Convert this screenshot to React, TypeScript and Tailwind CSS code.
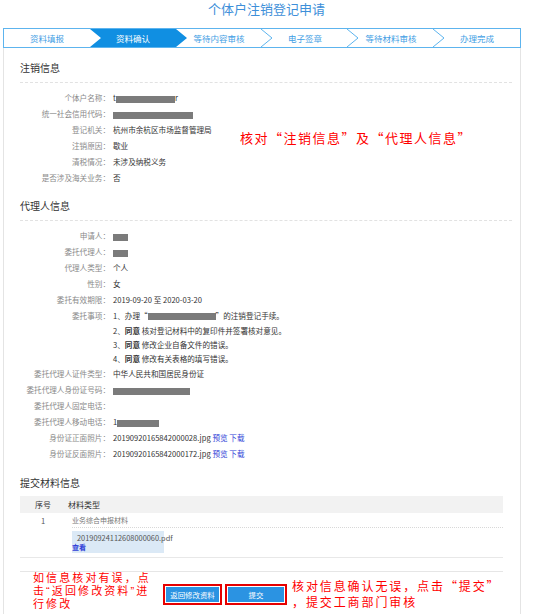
import { ReactNode } from "react";

const steps = ["资料填报", "资料确认", "等待内容审核", "电子签章", "等待材料审核", "办理完成"];

function Mask({ className }: { className: string }) {
    return <span className={`inline-block h-[7px] bg-[#7b7b7b] align-middle ${className}`} />;
}

function Row({ label, children }: { label: string; children?: ReactNode }) {
    return (
        <div className="flex h-4 items-center">
            <div className="w-[90px] shrink-0 text-right text-[#8a8a8a]">{label}：</div>
            <div className="pl-[3px] text-[#333]">{children}</div>
        </div>
    );
}

function Heading({ children, line = true }: { children: ReactNode; line?: boolean }) {
    return (
        <div className={`mr-[8px] ${line ? "border-b border-dashed border-[#e2e2e2] pb-1" : ""}`}>
            <h3 className="h-5 text-[10px] leading-5 text-[#333]">{children}</h3>
        </div>
    );
}

function Link({ children }: { children: ReactNode }) {
    return <span className="text-[#2f3fd8]">{children}</span>;
}

export default function App() {
    return (
        <div className="w-[533px] bg-white font-['Noto_Sans_CJK_SC',sans-serif] text-[7.6px]">
            {/* 标题 */}
            <h1 className="pt-[1px] text-center text-[13px] leading-[16px] text-[#3d8fd9]">个体户注销登记申请</h1>

            {/* 步骤条 */}
            <div className="ml-[3px] mt-[11px] flex h-[20px] w-[518px] border border-[#5db4ee] text-[8.5px]">
                {steps.map((s, i) => (
                    <div key={s} className="relative flex flex-1 items-center justify-center">
                        {i === 1 && (
                            <div className="absolute inset-y-0 left-0 -right-[11px] bg-[#108fe2] [clip-path:polygon(0_0,calc(100%-11px)_0,100%_50%,calc(100%-11px)_100%,0_100%,11px_50%)]" />
                        )}
                        <span className={`relative z-10 ${i === 1 ? "text-white" : "text-[#3f9ee4]"}`}>{s}</span>
                        {i >= 2 && i < 5 && (
                            <svg
                                className="absolute -right-[11px] top-0 z-10 h-full w-[12px]"
                                viewBox="0 0 12 18"
                                preserveAspectRatio="none"
                            >
                                <polyline points="0,0 11,9 0,18" fill="none" stroke="#5db4ee" strokeWidth="1" />
                            </svg>
                        )}
                    </div>
                ))}
            </div>

            {/* 内容 */}
            <div className="ml-[3px] w-[518px] border-x border-[#e4e4e4] pb-6 pl-4">
                {/* 注销信息 */}
                <div className="relative pt-[10px]">
                    <Heading>注销信息</Heading>
                    <div className="mt-[7px]">
                        <Row label="个体户名称">
                            t<Mask className="w-[59px]" />r
                        </Row>
                        <Row label="统一社会信用代码">
                            <Mask className="w-[80px]" />
                        </Row>
                        <Row label="登记机关">杭州市余杭区市场监督管理局</Row>
                        <Row label="注销原因">歇业</Row>
                        <Row label="清税情况">未涉及纳税义务</Row>
                        <Row label="是否涉及海关业务">否</Row>
                    </div>
                    <p className="absolute left-[220px] top-[81px] whitespace-nowrap text-[13px] leading-[18px] tracking-[1.5px] text-[#f00]">
                        核对“注销信息”及“代理人信息”
                    </p>
                </div>

                {/* 代理人信息 */}
                <div className="pt-[10px]">
                    <Heading>代理人信息</Heading>
                    <div className="mt-[7px]">
                        <Row label="申请人">
                            <Mask className="w-[15px]" />
                        </Row>
                        <Row label="委托代理人">
                            <Mask className="w-[15px]" />
                        </Row>
                        <Row label="代理人类型">个人</Row>
                        <Row label="性别">女</Row>
                        <Row label="委托有效期限">2019-09-20 至 2020-03-20</Row>
                        <div className="flex items-start">
                            <div className="h-4 w-[90px] shrink-0 text-right leading-4 text-[#8a8a8a]">委托事项：</div>
                            <div className="pl-[3px] text-[#333]">
                                <div className="h-4 leading-4">
                                    1、办理“<Mask className="w-[68px]" />”的注销登记手续。
                                </div>
                                <div className="h-[14px] leading-[14px]">2、<b>同意</b> 核对登记材料中的复印件并签署核对意见。</div>
                                <div className="h-[14px] leading-[14px]">3、<b>同意</b> 修改企业自备文件的错误。</div>
                                <div className="h-[14px] leading-[14px]">4、<b>同意</b> 修改有关表格的填写错误。</div>
                            </div>
                        </div>
                        <Row label="委托代理人证件类型">中华人民共和国居民身份证</Row>
                        <Row label="委托代理人身份证号码">
                            <Mask className="w-[77px]" />
                        </Row>
                        <Row label="委托代理人固定电话" />
                        <Row label="委托代理人移动电话">
                            1<Mask className="w-[42px]" />
                        </Row>
                        <Row label="身份证正面照片">
                            20190920165842000028.jpg <Link>预览</Link> <Link>下载</Link>
                        </Row>
                        <Row label="身份证反面照片">
                            20190920165842000172.jpg <Link>预览</Link> <Link>下载</Link>
                        </Row>
                    </div>
                </div>

                {/* 提交材料信息 */}
                <div className="mr-[17px] pt-[11px]">
                    <Heading line={false}>提交材料信息</Heading>
                    <div className="mt-[3px] flex h-[17px] items-center bg-[#f2f2f2] text-[8px] text-[#333]">
                        <div className="w-[46px] text-center">序号</div>
                        <div className="pl-[2px]">材料类型</div>
                    </div>
                    <div className="flex border-b border-[#e8e8e8] pb-1">
                        <div className="h-[15px] w-[46px] text-center leading-[15px] text-[#555]">1</div>
                        <div className="ml-[6px] flex-1">
                            <div className="h-[15px] border-b border-dotted border-[#d8d8d8] text-[7px] leading-[15px] text-[#777]">
                                业务综合申报材料
                            </div>
                            <div className="mt-[3px] w-[92px] bg-[#dbe9f6] pb-[1px] pt-[2px]">
                                <div className="pl-[5px] text-[7.4px] leading-[10px] text-[#555]">20190924112608000060.pdf</div>
                                <div className="text-[7px] font-bold leading-[9px] text-[#2f3fd8]">查看</div>
                            </div>
                        </div>
                    </div>

                    {/* 操作 */}
                    <div className="mt-[13px] flex items-start border-t border-[#e6e6e6]">
                        <p className="ml-[13px] w-[122px] whitespace-nowrap font-['Liberation_Sans','Noto_Sans_CJK_SC',sans-serif] text-[11px] leading-[13px] tracking-[2.1px] text-[#f00]">
                            如信息核对有误，点
                            <br />
                            击“返回修改资料”进
                            <br />
                            行修改
                        </p>
                        <div className="ml-[8px] mt-[12px] flex gap-[3px]">
                            <div className="border-2 border-[#e60000] p-px">
                                <button className="h-[15px] w-[53px] bg-[#2b93e2] text-[7.4px] leading-[15px] text-white">
                                    返回修改资料
                                </button>
                            </div>
                            <div className="border-2 border-[#e60000] p-px">
                                <button className="h-[15px] w-[56px] bg-[#2b93e2] text-[7.4px] leading-[15px] text-white">
                                    提交
                                </button>
                            </div>
                        </div>
                        <p className="ml-[5px] mt-[6px] whitespace-nowrap text-[12px] leading-[16px] tracking-[1.9px] text-[#f00]">
                            核对信息确认无误，点击“提交”
                            <br />
                            ，提交工商部门审核
                        </p>
                    </div>
                </div>
            </div>
        </div>
    );
}
